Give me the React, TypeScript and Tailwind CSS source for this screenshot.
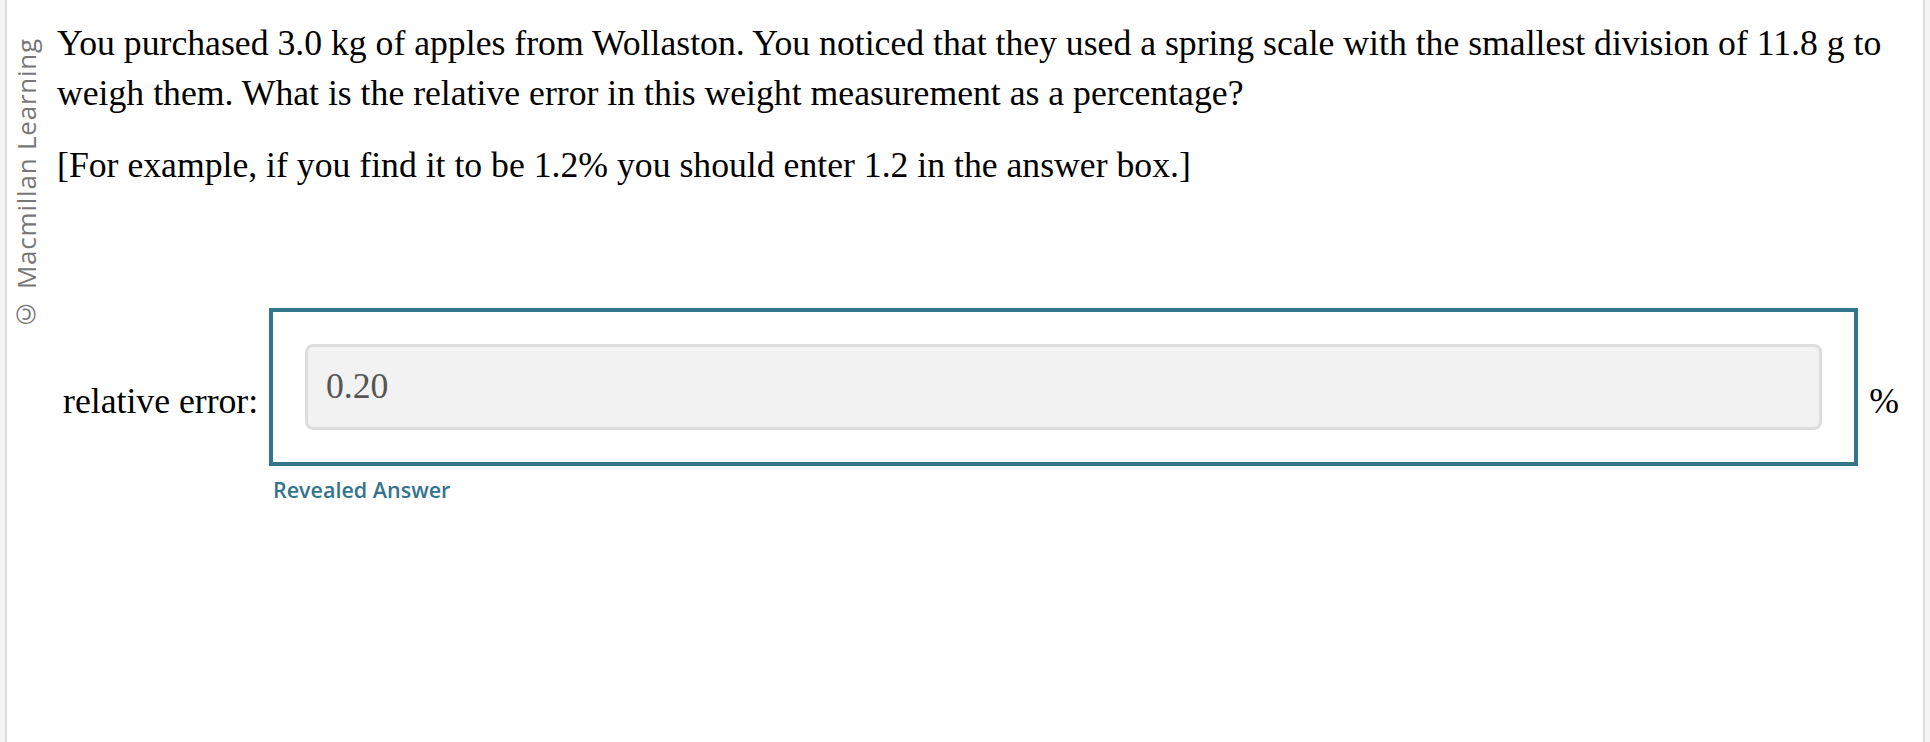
import React from 'react';

// Revealed-answer view of a numeric question
export default function App() {
  return (
    <div className="min-h-screen bg-[#f3f3f3] px-[5px]">
      <div className="flex min-h-[742px] border-x-2 border-[#dcdcdc] bg-white">
        {/* Copyright watermark, reads bottom to top */}
        <div className="w-[50px] shrink-0 pl-[1px] pt-[38px]">
          <span className="block rotate-180 whitespace-nowrap font-['Open_Sans',sans-serif] text-[26px] leading-[36px] tracking-[0.03em] text-[#777777] [writing-mode:vertical-rl]">
            © Macmillan Learning
          </span>
        </div>

        {/* Question */}
        <div className="flex-1 pr-[20px] pt-[18px] font-['Liberation_Serif','Times_New_Roman',serif] text-[35.7px] leading-[50px] text-black">
          <p className="mb-[22px]">
            You purchased 3.0 kg of apples from Wollaston. You noticed that they used a spring scale with the
            smallest division of 11.8 g to weigh them. What is the relative error in this weight measurement as a
            percentage?
          </p>
          <p>[For example, if you find it to be 1.2% you should enter 1.2 in the answer box.]</p>

          <div className="mt-[118px] flex items-start">
            <label className="ml-[6px] mt-[68px] w-[206px] shrink-0">relative error:</label>
            <div className="flex-1">
              <div className="border-4 border-[#34758e] p-[32px]">
                <div className="h-[86px] rounded-[8px] border-[3px] border-[#dddddd] bg-[#f2f2f2] pl-[18px] pt-[14px] text-[#555555]">
                  0.20
                </div>
              </div>
              <div className="mt-[10px] pl-[4px] font-['Open_Sans',sans-serif] text-[21.5px] font-semibold leading-[28px] text-[#34758e]">
                Revealed Answer
              </div>
            </div>
            <span className="ml-[11px] mr-[4px] mt-[68px] shrink-0">%</span>
          </div>
        </div>
      </div>
    </div>
  );
}
